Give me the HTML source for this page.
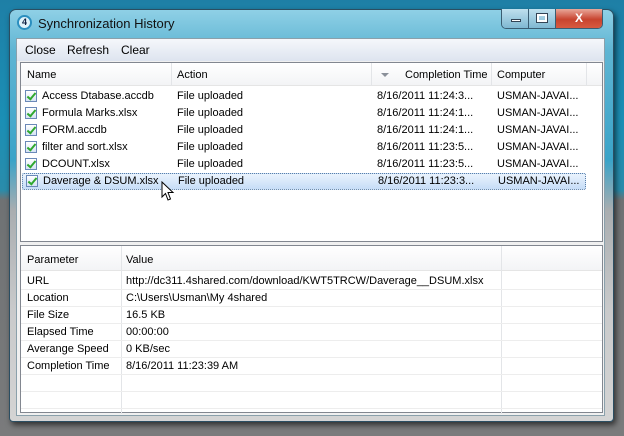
<!DOCTYPE html>
<html><head><style>
*{margin:0;padding:0;box-sizing:border-box}
body{width:624px;height:436px;overflow:hidden;position:relative;font-family:"Liberation Sans",sans-serif;font-size:11px;color:#000;
background:linear-gradient(180deg,#1e7fa6 0px,#1b8fb5 120px,#2a8cab 190px,#6f7274 200px,#7a7b7c 436px);}
.frame{position:absolute;left:9px;top:9px;width:605px;height:413px;border:1px solid #2b4e62;border-radius:7px 7px 4px 4px;
background:linear-gradient(180deg,#8fd0e6 0px,#5fb5d3 40px,#3aa3c8 150px,#a9adb0 200px,#c9cacb 300px,#d4d4d4 413px);box-shadow:2px 3px 6px rgba(0,0,0,.6)}
.title{position:absolute;left:38px;top:16px;font-size:13px;color:#111;font-family:"Liberation Sans",sans-serif}
.icon{position:absolute;left:17px;top:15px;width:15px;height:15px;border:2px solid #2b8fbf;border-radius:50%;background:#dff3fb;font-size:9px;text-align:center;line-height:11px;font-weight:bold;color:#124}
.btns{position:absolute;left:501px;top:9px;height:20px;width:102px;border:1px solid #3a5d72;border-top:none;border-radius:0 0 5px 5px;overflow:hidden;display:flex}
.btns div{height:100%}
.client{position:absolute;left:16px;top:38px;width:589px;height:378px;background:#f0f0f0;border:1px solid #8aa0ab}
.menu{position:absolute;left:0;top:0;width:100%;height:22px;background:linear-gradient(#f5f7fb,#dde4ef);font-size:12px}
.menu span{position:absolute;top:4px}
.panel{position:absolute;background:#fff;border:1px solid #828790}
.hdr{position:absolute;left:0;top:0;height:23px;width:100%;background:linear-gradient(#fff,#f3f4f6);border-bottom:1px solid #e5e5e5}
.hdr span{position:absolute;top:6px}
.vl{position:absolute;top:0;width:1px;background:#e3e5e8}
.row{position:absolute;left:0;width:100%;height:17px}
.row span{position:absolute;top:2px;white-space:nowrap}
.cb{position:absolute;left:4px;top:2px;width:12px;height:12px;border:1px solid #6b89b8;background:linear-gradient(#fff,#d6e3f5)}
.cb:after{content:"";position:absolute;left:3px;top:0px;width:3px;height:7px;border:solid #2fa82f;border-width:0 2px 2px 0;transform:rotate(40deg)}
.g{position:absolute;left:0;width:100%;height:1px;background:#ededed}
</style></head><body>
<div class="frame"></div>
<div class="icon">4</div>
<div class="title">Synchronization History</div>
<div class="btns">
<div style="width:28px;background:linear-gradient(#bfe0ee,#7fb8d2);border-right:1px solid #3a5d72;position:relative"><i style="position:absolute;left:9px;top:10px;width:10px;height:3px;background:#fff;border:1px solid #345"></i></div>
<div style="width:27px;background:linear-gradient(#bfe0ee,#7fb8d2);border-right:1px solid #3a5d72;position:relative"><i style="position:absolute;left:8px;top:5px;width:10px;height:8px;border:2px solid #fff;outline:1px solid #345"></i></div>
<div style="width:47px;background:linear-gradient(#e9a89a,#c8442f 55%,#d85a40);color:#fff;font-weight:bold;font-size:12px;text-align:center;line-height:18px">X</div>
</div>
<div class="client">
<div class="menu"><span style="left:8px">Close</span><span style="left:50px">Refresh</span><span style="left:104px">Clear</span></div>
<div class="panel" style="left:3px;top:23px;width:583px;height:180px">
 <div class="hdr"><span style="left:6px">Name</span><span style="left:156px">Action</span><span style="left:384px">Completion Time</span><span style="left:476px">Computer</span>
 <span style="left:360px;top:10px;width:0;height:0;border:4px solid transparent;border-top:4px solid #8a9099"></span></div>
 <div class="vl" style="left:150px;height:23px"></div><div class="vl" style="left:350px;height:23px"></div><div class="vl" style="left:470px;height:23px"></div><div class="vl" style="left:565px;height:23px"></div>
 <div class="row" style="top:25px"><i class="cb"></i><span style="left:21px">Access Dtabase.accdb</span><span style="left:156px">File uploaded</span><span style="left:356px">8/16/2011 11:24:3...</span><span style="left:476px">USMAN-JAVAI...</span></div>
 <div class="row" style="top:42px"><i class="cb"></i><span style="left:21px">Formula Marks.xlsx</span><span style="left:156px">File uploaded</span><span style="left:356px">8/16/2011 11:24:1...</span><span style="left:476px">USMAN-JAVAI...</span></div>
 <div class="row" style="top:59px"><i class="cb"></i><span style="left:21px">FORM.accdb</span><span style="left:156px">File uploaded</span><span style="left:356px">8/16/2011 11:24:1...</span><span style="left:476px">USMAN-JAVAI...</span></div>
 <div class="row" style="top:76px"><i class="cb"></i><span style="left:21px">filter and sort.xlsx</span><span style="left:156px">File uploaded</span><span style="left:356px">8/16/2011 11:23:5...</span><span style="left:476px">USMAN-JAVAI...</span></div>
 <div class="row" style="top:93px"><i class="cb"></i><span style="left:21px">DCOUNT.xlsx</span><span style="left:156px">File uploaded</span><span style="left:356px">8/16/2011 11:23:5...</span><span style="left:476px">USMAN-JAVAI...</span></div>
 <div class="row" style="top:110px;left:1px;width:564px;background:linear-gradient(#eaf3fd,#c6ddf7);border:1px dotted #5a7fa8;border-radius:2px"><i class="cb" style="left:3px;top:1px"></i><span style="left:20px;top:1px">Daverage &amp; DSUM.xlsx</span><span style="left:155px;top:1px">File uploaded</span><span style="left:355px;top:1px">8/16/2011 11:23:3...</span><span style="left:475px;top:1px">USMAN-JAVAI...</span></div>
 <svg style="position:absolute;left:140px;top:118px" width="14" height="22"><path d="M1 1 L1 16 L4.5 12.5 L7 19 L9.5 18 L7 11.5 L12 11.5 Z" fill="#fff" stroke="#000" stroke-width="1"/></svg>
</div>
<div class="panel" style="left:3px;top:206px;width:583px;height:168px">
 <div class="hdr" style="height:25px"><span style="left:6px;top:8px">Parameter</span><span style="left:105px;top:8px">Value</span></div>
 <div class="vl" style="left:100px;height:168px"></div><div class="vl" style="left:480px;height:168px"></div>
 <div class="g" style="top:43px"></div><div class="g" style="top:60px"></div><div class="g" style="top:77px"></div><div class="g" style="top:94px"></div><div class="g" style="top:111px"></div><div class="g" style="top:128px"></div><div class="g" style="top:145px"></div><div class="g" style="top:162px"></div>
 <div class="row" style="top:27px"><span style="left:6px">URL</span><span style="left:105px">http://dc311.4shared.com/download/KWT5TRCW/Daverage__DSUM.xlsx</span></div>
 <div class="row" style="top:44px"><span style="left:6px">Location</span><span style="left:105px">C:\Users\Usman\My 4shared</span></div>
 <div class="row" style="top:61px"><span style="left:6px">File Size</span><span style="left:105px">16.5 KB</span></div>
 <div class="row" style="top:78px"><span style="left:6px">Elapsed Time</span><span style="left:105px">00:00:00</span></div>
 <div class="row" style="top:95px"><span style="left:6px">Averange Speed</span><span style="left:105px">0 KB/sec</span></div>
 <div class="row" style="top:112px"><span style="left:6px">Completion Time</span><span style="left:105px">8/16/2011 11:23:39 AM</span></div>
</div>
</div>
</body></html>
